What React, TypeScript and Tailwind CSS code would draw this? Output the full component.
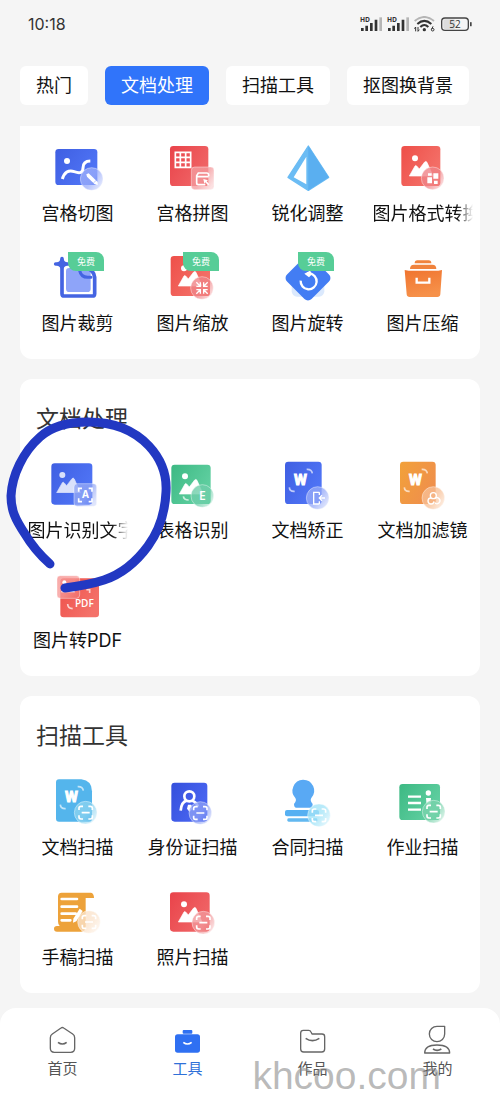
import type { ReactNode } from 'react'
import clsx from 'clsx'

type Tool = {
  label: string
  icon: ReactNode
  free?: boolean
}

// Tool icons are drawn on a 183 x 156 grid
const TILE = {
  blue: ['#3f5fe2', '#5075f6'],
  royal: ['#3550dc', '#4a66f2'],
  red: ['#e9434a', '#f06667'],
  coral: ['#ee4f49', '#f4726a'],
  green: ['#3cb983', '#62d0a2'],
  orange: ['#f2a13a', '#ef8f4c'],
} as const

type TileProps = {
  id: string
  tone: keyof typeof TILE
  x: number
  y: number
  w: number
  h: number
}

function Tile({ id, tone, x, y, w, h }: TileProps) {
  return (
    <>
      <defs>
        <linearGradient id={id} x1="0" y1="0" x2="1" y2="0.6">
          <stop offset="0" stopColor={TILE[tone][0]} />
          <stop offset="1" stopColor={TILE[tone][1]} />
        </linearGradient>
      </defs>
      <rect x={x} y={y} width={w} height={h} rx="10" fill={`url(#${id})`} />
    </>
  )
}

type BadgeProps = {
  id: string
  x: number
  y: number
  color: string
  square?: boolean
  children?: ReactNode
}

function Badge({ id, x, y, color, square, children }: BadgeProps) {
  return (
    <g transform={`translate(${x} ${y})`}>
      <defs>
        <linearGradient id={id} x1="0" y1="0" x2="1" y2="0.7">
          <stop offset="0" stopColor={color} stopOpacity="0.85" />
          <stop offset="0.6" stopColor={color} stopOpacity="0.75" />
          <stop offset="1" stopColor={color} stopOpacity="0.3" />
        </linearGradient>
      </defs>
      <rect
        x="-34"
        y="-34"
        width="68"
        height="68"
        rx={square ? 10 : 34}
        fill={`url(#${id})`}
        stroke="#fff"
        strokeOpacity="0.4"
        strokeWidth="3"
      />
      {children}
    </g>
  )
}

function ScanMark() {
  return (
    <path
      d="M-20 -8V-14Q-20 -19 -14 -19H-8M8 -19H14Q20 -19 20 -14V-8M20 8V14Q20 19 14 19H8M-8 19H-14Q-20 19 -20 14V8M-12 0H12"
      fill="none"
      stroke="#fff"
      strokeWidth="5"
    />
  )
}

function Photo({ x, y, opacity = 1 }: { x: number; y: number; opacity?: number }) {
  return (
    <g transform={`translate(${x} ${y})`} fill="#fff" opacity={opacity}>
      <circle cx="18" cy="9" r="9" />
      <path
        d="M1 62L18 32Q20 29 23 32L31 41L47 20Q51 16 54 21L72 62Z"
        stroke="#fff"
        strokeWidth="2"
        strokeLinejoin="round"
      />
    </g>
  )
}

function Word({ x, y }: { x: number; y: number }) {
  return (
    <g>
      <text
        x={x}
        y={y + 15}
        textAnchor="middle"
        fill="#fff"
        stroke="#fff"
        strokeWidth="3"
        className="font-['Roboto',sans-serif] text-[44px] font-bold"
      >
        W
      </text>
      <path
        d={`M${x + 19} ${y - 32}q15 -1 17 12M${x - 33} ${y + 22}q1 13 16 12`}
        fill="none"
        stroke="#fff"
        strokeOpacity="0.65"
        strokeWidth="5"
      />
    </g>
  )
}

function Icon({ children }: { children: ReactNode }) {
  return (
    <svg viewBox="0 0 183 156" className="h-[52px] w-[61px]" aria-hidden="true">
      {children}
    </svg>
  )
}

const imageTools: Tool[] = [
  {
    label: '宫格切图',
    icon: (
      <Icon>
        <Tile id="split" tone="blue" x={25} y={21} w={126} h={108} />
        <circle cx="60" cy="57" r="9" fill="#fff" />
        <path d="M46 111C52 92 64 82 82 89C99 95 108 92 108 78C108 65 114 57 130 57" fill="none" stroke="#fff" strokeWidth="9" />
        <Badge id="split-b" x={134} y={111} color="#9badfa">
          <path d="M-16 -14L-9 -17L18 9V18L9 16L-14 -7Z" fill="#fff" />
          <path d="M5 12L16 2" stroke="#9badfa" strokeWidth="2" />
        </Badge>
      </Icon>
    ),
  },
  {
    label: '宫格拼图',
    icon: (
      <Icon>
        <Tile id="join" tone="red" x={24} y={12} w={115} h={120} />
        <path d="M40 31H86V76H40ZM55 31V76M71 31V76M40 46H86M40 61H86" fill="none" stroke="#fff" strokeWidth="5" />
        <Badge id="join-b" x={122} y={109} color="#f49a9d" square>
          <path d="M18 -6V-10Q18 -16 12 -16H-13L-18 -8V14Q-18 19 -13 19H8M-18 -5H18" fill="none" stroke="#fff" strokeWidth="5" />
          <path d="M2 2L16 6L12 9L20 18L16 21L8 12L5 16Z" fill="#fff" />
        </Badge>
      </Icon>
    ),
  },
  {
    label: '锐化调整',
    icon: (
      <Icon>
        <path d="M94 12L155 106L94 145L33 106Z" fill="#6bbcf4" stroke="#6bbcf4" strokeWidth="4" strokeLinejoin="round" />
        <path d="M94 12L155 106L94 145Z" fill="#5aaff0" />
        <path d="M88 44V127L50 106Z" fill="#fff" />
      </Icon>
    ),
  },
  {
    label: '图片格式转换',
    icon: (
      <Icon>
        <Tile id="convert" tone="coral" x={28} y={12} w={117} h={120} />
        <Photo x={51} y={40} />
        <Badge id="convert-b" x={122} y={109} color="#f08488">
          <path d="M-16 -3H-2V15H-16ZM2 -15H17V1H2ZM4 7H15V17H4ZM-14 -15H-3V-8H-14Z" fill="#fff" />
        </Badge>
      </Icon>
    ),
  },
  {
    label: '图片裁剪',
    free: true,
    icon: (
      <Icon>
        <rect x="57" y="48" width="74" height="72" rx="10" fill="#8ea4f9" />
        <path d="M45 20V125Q45 132 52 132H136Q143 132 143 125V76Q140 54 120 50M26 36H64" fill="none" stroke="#4464e2" strokeWidth="11" strokeLinecap="round" />
        <path d="M98 56Q102 76 122 76H132" fill="none" stroke="#4464e2" strokeWidth="9" strokeLinecap="round" />
        <path d="M45 14L53 28L66 36L53 44L45 54L37 44L24 36L37 28Z" fill="#4464e2" />
      </Icon>
    ),
  },
  {
    label: '图片缩放',
    free: true,
    icon: (
      <Icon>
        <Tile id="scale" tone="coral" x={26} y={12} w={118} h={120} />
        <Photo x={48} y={40} />
        <Badge id="scale-b" x={120} y={108} color="#f08488">
          <path
            d="M-17 -17L-6 -6M-17 -5H-5V-17M17 -17L6 -6M17 -5H5V-17M-17 17L-6 6M-17 5H-5V17M17 17L6 6M17 5H5V17"
            fill="none"
            stroke="#fff"
            strokeWidth="4"
          />
        </Badge>
      </Icon>
    ),
  },
  {
    label: '图片旋转',
    free: true,
    icon: (
      <Icon>
        <rect x="44" y="66" width="98" height="68" rx="16" fill="#dbe9fd" />
        <rect x="41" y="26" width="104" height="104" rx="15" transform="rotate(45 93 78)" fill="#437df3" />
        <path d="M71 86A24 24 0 1 0 97 64H90" fill="none" stroke="#fff" strokeWidth="7" />
        <path d="M82 65L99 56L106 66L96 76Z" fill="#fff" />
      </Icon>
    ),
  },
  {
    label: '图片压缩',
    icon: (
      <Icon>
        <defs>
          <linearGradient id="box" x1="0" y1="0" x2="0.3" y2="1">
            <stop offset="0" stopColor="#f0742f" />
            <stop offset="1" stopColor="#f6914a" />
          </linearGradient>
        </defs>
        <path d="M68 34Q68 25 76 25H110Q118 25 118 34Z" fill="#f0823c" />
        <path d="M54 51Q54 38 66 38H121Q133 38 133 51Z" fill="#f0823c" />
        <path d="M38 54L50 56H139L150 54L145 127Q144 135 136 135H53Q45 135 44 127Z" fill="url(#box)" />
        <path d="M74 77V92H112V77" fill="none" stroke="#fff" strokeWidth="7" />
      </Icon>
    ),
  },
]

const docTools: Tool[] = [
  {
    label: '图片识别文字',
    icon: (
      <Icon>
        <Tile id="ocr" tone="blue" x={13} y={13} w={123} h={124} />
        <Photo x={28} y={39} opacity={0.8} />
        <Badge id="ocr-b" x={115} y={108} color="#94a8f5" square>
          <path d="M-20 -10V-20H-10M10 -20H20V-10M20 10V20H10M-10 20H-20V10" fill="none" stroke="#fff" strokeWidth="5" />
          <text y="10" textAnchor="middle" fill="#fff" className="font-['Open_Sans',sans-serif] text-[30px] font-bold">
            A
          </text>
        </Badge>
      </Icon>
    ),
  },
  {
    label: '表格识别',
    icon: (
      <Icon>
        <Tile id="table" tone="green" x={28} y={17} w={118} h={118} />
        <Photo x={51} y={43} />
        <path d="M64 112Q66 123 80 123" fill="none" stroke="#fff" strokeOpacity="0.7" strokeWidth="5" />
        <Badge id="table-b" x={121} y={111} color="#6fceaa">
          <text y="12" textAnchor="middle" fill="#fff" className="font-['Open_Sans',sans-serif] text-[36px] font-semibold">
            E
          </text>
        </Badge>
      </Icon>
    ),
  },
  {
    label: '文档矫正',
    icon: (
      <Icon>
        <Tile id="fix" tone="blue" x={24} y={8} w={110} h={127} />
        <Word x={70} y={63} />
        <Badge id="fix-b" x={122} y={117} color="#96aaf8">
          <path d="M5 -17H-12V18H5M5 -17V-9M5 18V10M22 0H6M13 -8L5 0L13 8" fill="none" stroke="#fff" strokeWidth="4" />
        </Badge>
      </Icon>
    ),
  },
  {
    label: '文档加滤镜',
    icon: (
      <Icon>
        <Tile id="filter" tone="orange" x={24} y={8} w={107} h={127} />
        <Word x={70} y={63} />
        <Badge id="filter-b" x={124} y={117} color="#f8bf94">
          <g fill="none" stroke="#fff" strokeWidth="4">
            <circle cy="-7" r="9" />
            <path d="M-6 0A9 9 0 1 0 2 10M5 1A9 9 0 1 1 4 14" />
          </g>
        </Badge>
      </Icon>
    ),
  },
  {
    label: '图片转PDF',
    icon: (
      <Icon>
        <Tile id="pdf" tone="coral" x={40} y={28} w={116} h={117} />
        <path d="M62 105Q62 118 77 119M118 62H128V72" fill="none" stroke="#fff" strokeOpacity="0.7" strokeWidth="5" />
        <text x="112" y="115" textAnchor="middle" fill="#fff" className="font-['Open_Sans',sans-serif] text-[30px] font-semibold">
          PDF
        </text>
        <Badge id="pdf-b" x={64} y={54} color="#f79a98" square>
          <circle cx="-12" cy="-14" r="6" fill="#fff" />
          <path d="M-22 16L-8 -4L2 8L10 -2L20 16Z" fill="#fff" />
        </Badge>
      </Icon>
    ),
  },
]

const scanTools: Tool[] = [
  {
    label: '文档扫描',
    icon: (
      <Icon>
        <path d="M36 10H103Q135 14 135 46V128Q135 137 126 137H36Q27 137 27 128V19Q27 10 36 10Z" fill="#54b5ec" />
        <Word x={73} y={64} />
        <Badge id="scan-doc" x={116} y={110} color="#8bd3f0">
          <ScanMark />
        </Badge>
      </Icon>
    ),
  },
  {
    label: '身份证扫描',
    icon: (
      <Icon>
        <Tile id="idcard" tone="royal" x={28} y={20} w={108} h={117} />
        <circle cx="82" cy="61" r="15" fill="none" stroke="#fff" strokeWidth="8" />
        <path d="M56 104Q58 78 74 74M90 74Q104 78 108 92" fill="none" stroke="#fff" strokeWidth="8" />
        <path d="M78 86H88L91 98L83 108L75 98Z" fill="#fff" />
        <Badge id="scan-id" x={115} y={111} color="#8b9ff5">
          <ScanMark />
        </Badge>
      </Icon>
    ),
  },
  {
    label: '合同扫描',
    icon: (
      <Icon>
        <path
          d="M78 11A33 33 0 0 1 103 66Q98 74 107 84Q107 95 100 95H58Q51 95 51 84Q60 74 55 66A33 33 0 0 1 78 11Z"
          fill="#59a9f4"
        />
        <rect x="24" y="102" width="102" height="19" rx="6" fill="#56b0f2" />
        <rect x="31" y="127" width="90" height="10" rx="4" fill="#62b8f0" />
        <Badge id="scan-deal" x={126} y={118} color="#a3e4f8">
          <ScanMark />
        </Badge>
      </Icon>
    ),
  },
  {
    label: '作业扫描',
    icon: (
      <Icon>
        <Tile id="work" tone="green" x={22} y={24} w={122} h={108} />
        <path d="M48 62H87M48 81H87M48 101H87" stroke="#fff" strokeWidth="7" />
        <circle cx="109" cy="51" r="8" fill="#fff" />
        <path d="M102 66H117L115 90H104Z" fill="#fff" />
        <Badge id="scan-work" x={125} y={107} color="#79d3ac">
          <ScanMark />
        </Badge>
      </Icon>
    ),
  },
  {
    label: '手稿扫描',
    icon: (
      <Icon>
        <path
          d="M44 20H132Q141 22 141 36H116V121Q116 137 102 137H30Q21 137 21 128Q21 120 30 120H38Q33 116 33 106V32Q33 20 44 20Z"
          fill="#eda23a"
        />
        <path d="M44 39H90M44 62H90M44 83H86M44 103H70" stroke="#fff" strokeWidth="8" strokeLinecap="round" />
        <Badge id="scan-draft" x={126} y={108} color="#fbe3cb">
          <ScanMark />
        </Badge>
        <path d="M98 68L107 75L88 106L78 110L79 98Z" fill="#fff" />
      </Icon>
    ),
  },
  {
    label: '照片扫描',
    icon: (
      <Icon>
        <Tile id="photo" tone="red" x={24} y={19} w={119} h={118} />
        <Photo x={48} y={46} />
        <Badge id="scan-photo" x={124} y={110} color="#f2989b">
          <ScanMark />
        </Badge>
      </Icon>
    ),
  },
]

function ToolGrid({ tools }: { tools: Tool[] }) {
  return (
    <div className="grid grid-cols-4 gap-y-6">
      {tools.map((tool) => (
        <button key={tool.label} type="button" className="flex flex-col items-center gap-1.5">
          <span className="relative">
            {tool.icon}
            {tool.free && (
              <span className="absolute left-[21px] top-0 flex h-[19px] w-9 items-center justify-center rounded-bl-lg rounded-tr-lg bg-[#57cd97] text-[9px] text-white">
                免费
              </span>
            )}
          </span>
          <span
            className={clsx(
              'max-w-[100px] overflow-hidden whitespace-nowrap text-lg leading-7',
              tool.label.length > 5 &&
                !tool.label.endsWith('PDF') &&
                '[mask-image:linear-gradient(to_right,black_84%,transparent)]'
            )}
          >
            {tool.label}
          </span>
        </button>
      ))}
    </div>
  )
}

function Section({ title, tools, children }: { title: string; tools: Tool[]; children?: ReactNode }) {
  return (
    <section className="relative rounded-xl bg-white pb-[21px] pt-6">
      <h2 className="mb-6 px-4 text-[23px] leading-8 text-[#333]">{title}</h2>
      <ToolGrid tools={tools} />
      {children}
    </section>
  )
}

function Signal() {
  return (
    <svg viewBox="0 0 66 48" className="h-4 w-[22px] overflow-visible" aria-hidden="true">
      <path d="M3 36H11V45H3ZM16 29H24V45H16ZM30 21H38V45H30ZM44 11H52V45H44Z" fill="#333" />
      <path d="M58 4H66V45H58Z" fill="#b5b5b5" />
      <text x="0" y="17" fill="#333" className="font-['Open_Sans',sans-serif] text-[20px] font-bold">
        HD
      </text>
    </svg>
  )
}

function StatusBar() {
  return (
    <div className="flex h-12 items-center justify-between px-7">
      <span className="font-['Inter',sans-serif] text-base text-[#333]">10:18</span>
      <div className="flex items-center gap-[5px]">
        <Signal />
        <Signal />
        <svg viewBox="0 0 63 48" className="h-4 w-[21px]" fill="none" strokeWidth="6" aria-hidden="true">
          <path d="M2 15Q31 -9 60 15" stroke="#b5b5b5" />
          <path d="M10 24Q31 5 52 24M19 33Q31 21 43 33" stroke="#333" />
          <circle cx="31" cy="41" r="5" fill="#333" />
          <path d="M5 33V46M1 38L5 33M12 33V46M16 41L12 46" stroke="#333" strokeWidth="3" />
          <path d="M57 31L53 40" stroke="#333" strokeWidth="3" />
          <circle cx="56" cy="41" r="4" stroke="#333" strokeWidth="3" />
        </svg>
        <svg viewBox="0 0 96 48" className="h-4 w-8" aria-hidden="true">
          <rect x="10" y="10" width="36" height="29" rx="5" fill="#dcdcdc" />
          <rect x="5" y="6" width="80" height="37" rx="10" fill="none" stroke="#444" strokeWidth="4" />
          <rect x="90" y="18" width="5" height="13" rx="2" fill="#444" />
          <text x="45" y="35" textAnchor="middle" fill="#333" className="font-['Open_Sans',sans-serif] text-[30px]">
            52
          </text>
        </svg>
      </div>
    </div>
  )
}

const tabs = ['热门', '文档处理', '扫描工具', '抠图换背景']

const navItems = [
  {
    label: '首页',
    icon: (
      <>
        <path d="M36 9Q40 6 44 9L71 27Q77 31 77 38V70Q77 82 65 82H16Q4 82 4 70V38Q4 31 10 27Z" />
        <path d="M27 52Q40 62 53 52" strokeWidth="5" />
      </>
    ),
  },
  {
    label: '工具',
    active: true,
    icon: (
      <>
        <rect x="26" y="15" width="29" height="11" rx="3" fill="#2f70f2" stroke="none" />
        <rect x="3" y="28" width="75" height="55" rx="8" fill="#2f70f2" stroke="none" />
        <path d="M28 52Q40 62 53 52" stroke="#fff" strokeWidth="5" />
      </>
    ),
  },
  {
    label: '作品',
    icon: (
      <>
        <path d="M13 16H29Q34 16 36 21L39 27H69Q77 27 77 35V72Q77 81 68 81H14Q5 81 5 72V24Q5 16 13 16Z" />
        <path d="M20 40Q40 54 61 40" strokeWidth="5" />
      </>
    ),
  },
  {
    label: '我的',
    icon: (
      <>
        <path d="M39 4H62V27A23 23 0 1 1 39 4Z" />
        <path d="M2 84Q2 60 39 60Q77 60 77 84Z" />
        <path d="M27 72Q39 80 52 72" strokeWidth="5" />
      </>
    ),
  },
]

function BottomNav() {
  return (
    <nav className="relative mt-[15px] grid grid-cols-4 rounded-t-2xl bg-white pb-[19px] pt-[17px]">
      {navItems.map((item) => (
        <a
          key={item.label}
          href="#"
          aria-current={item.active ? 'page' : undefined}
          className={clsx(
            'flex flex-col items-center gap-1 text-[15px] leading-5',
            item.active ? 'text-[#2f70d8]' : 'text-[#555]'
          )}
        >
          <svg viewBox="0 0 81 90" className="h-[30px] w-[27px]" fill="none" stroke="#666" strokeWidth="4" strokeLinejoin="round" aria-hidden="true">
            {item.icon}
          </svg>
          {item.label}
        </a>
      ))}
      <span className="pointer-events-none absolute bottom-0 right-[59px] font-['Liberation_Sans',sans-serif] text-[39px] leading-[44px] text-[#8c8c8c]/60">
        khcoo.com
      </span>
    </nav>
  )
}

function App() {
  return (
    <div className="min-h-screen bg-[#f5f5f5] font-['Inter','Noto_Sans_CJK_SC',sans-serif] text-[#111]">
      <StatusBar />
      <div className="mb-[21px] mt-[18px] flex gap-[17px] overflow-x-auto px-5">
        {tabs.map((tab) => (
          <button
            key={tab}
            type="button"
            className={clsx(
              'h-[39px] shrink-0 rounded-md px-4 text-lg leading-7',
              tab === '文档处理' ? 'bg-[#3074fa] text-white' : 'bg-white'
            )}
          >
            {tab}
          </button>
        ))}
      </div>
      <main className="flex flex-col gap-5 px-5">
        <section className="rounded-b-xl bg-white pb-[21px] pt-4">
          <ToolGrid tools={imageTools} />
        </section>
        <Section title="文档处理" tools={docTools}>
          {/* hand-drawn circle round the first tool */}
          <svg
            viewBox="0 0 180 200"
            className="pointer-events-none absolute -left-5 top-[21px] h-[200px] w-[180px]"
            fill="none"
            stroke="#2238c2"
            strokeWidth="9"
            strokeLinecap="round"
            aria-hidden="true"
          >
            <path d="M50 164C40 155 32 146 25 134C15 119 11 110 11 96C12 75 23 52 40 37C52 26 68 22 88 22C112 22 134 30 149 46C162 60 167 76 166 92C165 113 159 131 148 146C137 161 122 174 104 180C92 184 80 186 65 188" />
          </svg>
        </Section>
        <Section title="扫描工具" tools={scanTools} />
      </main>
      <BottomNav />
    </div>
  )
}

export default App
